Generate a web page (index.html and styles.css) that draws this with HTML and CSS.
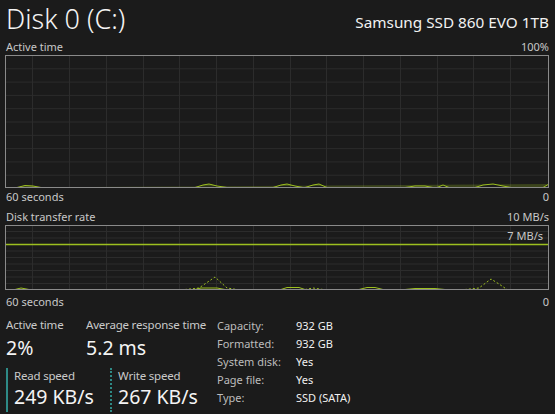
FILE: index.html
```html
<!DOCTYPE html>
<html>
<head>
<meta charset="utf-8">
<link rel="stylesheet" href="styles.css">
</head>
<body>
<div class="page">
  <header class="head">
    <h1 class="title">Disk 0 (C:)</h1>
    <div class="model">Samsung SSD 860 EVO 1TB</div>
  </header>

  <section class="graph">
    <div class="axis top"><span>Active time</span><span>100%</span></div>
    <svg class="chart c1" width="544" height="133" viewBox="0 0 544 133">
      <g stroke="#2c2c2c" stroke-width="1">
        <path d="M0 13.8H544M0 27.1H544M0 40.4H544M0 53.7H544M0 67H544M0 80.3H544M0 93.6H544M0 106.9H544M0 120.2H544"/>
        <path d="M27.5 0V133M64.5 0V133M101.5 0V133M138.5 0V133M174.5 0V133M211.5 0V133M248.5 0V133M285.5 0V133M321.5 0V133M358.5 0V133M395.5 0V133M432.5 0V133M468.5 0V133M505.5 0V133"/>
      </g>
      <path d="M0 132.5L12 132.5L20 130.5L28 131L36 132.5L190 132.5L198 130L204 129L212 131L222 132.5L268 132.5L276 130L282 129L290 131L298 132.5L300 132.5L308 130L314 129L322 132.5L400 132.5L410 131L420 131L428 132.5L432 132.5L438 130L444 132.5L470 132.5L478 130L488 129L498 131L506 132.5L538 132.5L544 129" fill="rgba(156,191,31,0.25)" stroke="#9cbf1f" stroke-width="1"/>
      <rect x="0.5" y="0.5" width="543" height="132" fill="none" stroke="#8a8a8a"/>
    </svg>
    <div class="axis bottom"><span>60 seconds</span><span>0</span></div>
  </section>

  <section class="graph g2">
    <div class="axis top"><span>Disk transfer rate</span><span>10 MB/s</span></div>
    <div class="chart-wrap">
      <svg class="chart c2" width="544" height="65" viewBox="0 0 544 65">
        <g stroke="#2c2c2c" stroke-width="1">
          <path d="M0 6.5H544M0 13H544M0 26H544M0 32.5H544M0 39H544M0 45.5H544M0 52H544M0 58.5H544"/>
          <path d="M27.5 0V65M64.5 0V65M101.5 0V65M138.5 0V65M174.5 0V65M211.5 0V65M248.5 0V65M285.5 0V65M321.5 0V65M358.5 0V65M395.5 0V65M432.5 0V65M468.5 0V65M505.5 0V65"/>
        </g>
        <path d="M0 19.5H544" stroke="#9cbf1f" stroke-width="1.5"/>
        <path d="M0 64.5L10 64.5L16 63L24 64.5L190 64.5L196 63L212 63L220 64.5L276 64.5L282 62.5L294 62.5L300 64.5L354 64.5L362 62.5L370 62.5L378 64.5L400 64.5L410 63.5L430 63.5L440 64.5L544 64.5" fill="none" stroke="#9cbf1f" stroke-width="1"/>
        <path d="M180 64.5L194 63L210 52L222 63L232 64.5L300 64.5L308 63L318 64.5L460 64.5L474 63L486 54L494 59L502 64.5L544 64.5" fill="none" stroke="#9cbf1f" stroke-width="1" stroke-dasharray="2 2"/>
        <rect x="0.5" y="0.5" width="543" height="64" fill="none" stroke="#8a8a8a"/>
      </svg>
      <span class="tag">7 MB/s</span>
    </div>
    <div class="axis bottom b2"><span>60 seconds</span><span>0</span></div>
  </section>

  <section class="stats">
    <div class="left">
      <div class="row">
        <div class="stat w80"><div class="lbl">Active time</div><div class="val">2%</div></div>
        <div class="stat"><div class="lbl">Average response time</div><div class="val">5.2 ms</div></div>
      </div>
      <div class="row">
        <div class="stat speed read"><div class="lbl">Read speed</div><div class="val">249 KB/s</div></div>
        <div class="stat speed write"><div class="lbl">Write speed</div><div class="val">267 KB/s</div></div>
      </div>
    </div>
    <dl class="info">
      <dt>Capacity:</dt><dd>932 GB</dd>
      <dt>Formatted:</dt><dd>932 GB</dd>
      <dt>System disk:</dt><dd>Yes</dd>
      <dt>Page file:</dt><dd>Yes</dd>
      <dt>Type:</dt><dd>SSD (SATA)</dd>
    </dl>
  </section>
</div>
</body>
</html>
```

FILE: styles.css
```css
html, body {
  margin: 0;
  padding: 0;
  background: #1b1b1b;
}
body {
  width: 555px;
  height: 414px;
  overflow: hidden;
  font-family: "Noto Sans", "Open Sans", sans-serif;
  color: #c9c9c9;
}
.page {
  padding: 0 6px 0 5px;
}
.head {
  display: flex;
  justify-content: space-between;
  align-items: flex-start;
  height: 40px;
}
.title {
  margin: 0;
  font-weight: 300;
  font-size: 27px;
  line-height: normal;
  color: #f4f4f4;
  padding-left: 1px;
  white-space: nowrap;
}
.model {
  font-size: 15.3px;
  color: #f2f2f2;
  line-height: 20px;
  margin-top: 12px;
  white-space: nowrap;
}
.axis {
  display: flex;
  justify-content: space-between;
  font-size: 11px;
  line-height: 14px;
  color: #c8c8c8;
  padding-left: 1px;
}
.axis.top { height: 15px; }
.axis.bottom { height: 16px; padding-top: 2px; }
.axis.b2 { padding-top: 5px; }
.chart { display: block; }
.g2 { margin-top: 4px; }
.chart-wrap { position: relative; }
.tag {
  position: absolute;
  right: 6px;
  top: 4px;
  font-size: 11px;
  line-height: 14px;
  color: #c8c8c8;
}
.stats {
  display: flex;
  margin-top: 5px;
  padding-left: 1px;
}
.left { width: 211px; }
.row { display: flex; }
.row + .row { margin-top: 6px; }
.stat { padding-top: 1px; }
.w80 { width: 80px; }
.lbl {
  font-size: 11.5px;
  line-height: 15px;
  color: #cacaca;
  letter-spacing: -0.2px;
}
.val {
  font-size: 19.5px;
  line-height: 28px;
  margin-top: 2px;
  color: #f4f4f4;
}
.speed {
  padding-left: 6px;
  height: 44px;
  padding-top: 0;
}
.speed .val { margin-top: 0; }
.read {
  width: 96px;
  border-left: 2px solid #2e8a86;
}
.write {
  border-left: 2px dotted #2e8a86;
}
.info {
  margin: 0;
  padding-top: 1px;
  display: grid;
  grid-template-columns: 79px auto;
  grid-auto-rows: 18px;
  font-size: 11px;
  line-height: 18px;
}
.info dt { color: #bdbdbd; }
.info dd { margin: 0; color: #f0f0f0; }
```
